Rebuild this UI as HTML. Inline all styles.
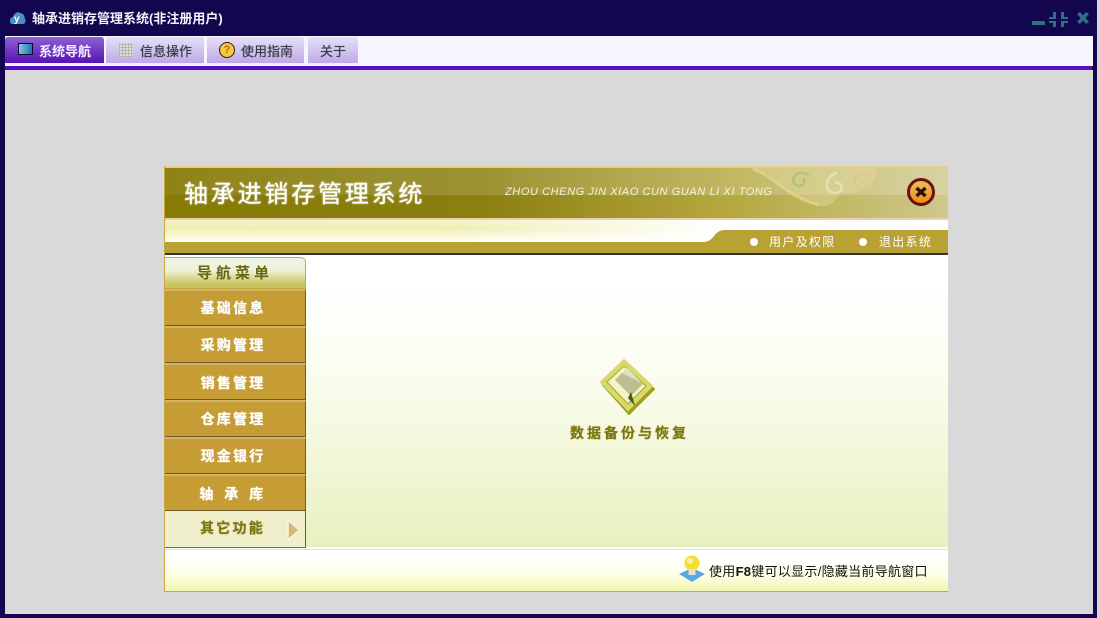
<!DOCTYPE html>
<html><head><meta charset="utf-8"><style>
html,body{margin:0;padding:0;width:1099px;height:618px;overflow:hidden;background:#d9d9d9}
body{position:relative;font-family:"Liberation Sans","WenQuanYi Zen Hei","Noto Sans CJK SC",sans-serif}
.a{position:absolute;white-space:nowrap}
.tab{position:absolute;top:37px;height:26px;background:linear-gradient(#e6def8,#d2c6f0 50%,#bea8e6);border-radius:3px 3px 0 0;border-bottom:2px solid #f1ecfc;font-size:13px;color:#3c3a48;line-height:29px;text-shadow:0 0 .6px #3c3a48}
.m{position:absolute;left:165px;width:141px;background:#c69d35;border-top:2px solid #d3b467;border-bottom:1px solid #6e5a25;border-right:1px solid #6e5a25;box-sizing:border-box;color:#fff;font-size:14px;font-weight:bold;text-align:center;letter-spacing:2.200px;padding-right:4px;text-shadow:0 0 1px #fff}
</style></head><body>
<div class="a" style="left:0;top:0;width:1097px;height:618px;background:#12064f"></div>
<div class="a" style="left:1097px;top:0;width:2px;height:618px;background:#d9d9d9"></div>
<div class="a" style="left:5px;top:70px;width:1088px;height:544px;background:#d9d9d9"></div>
<svg class="a" style="left:9px;top:11px" width="18" height="15" viewBox="0 0 18 15"><path d="M1 10C1 7 3 6 4 6 5 2 9 0 11 2 14 2 16 5 15.500 7 17 8 17 13 14 13H3C2 13 1 12 1 10Z" fill="#4a90c8"/><text x="5" y="11" font-size="10" font-weight="bold" fill="#fff" font-family="Liberation Sans">y</text></svg>
<div class="a" style="left:32px;top:11px;font-size:13px;font-weight:bold;color:#f4f2fb;line-height:16px">轴承进销存管理系统(非注册用户)</div>
<svg class="a" style="left:1030px;top:10px" width="62" height="18" fill="#2f6f86"><rect x="2" y="11" width="13" height="4"/><path d="M23 2h3v7h-7v-2h4zM31 2h3v5h4v2h-7zM19 11h7v6h-3v-4h-4zM31 11h7v2h-4v4h-3z"/><path d="M47 4l3-2 3 3.500L56 2l3 2-3.500 4 3.500 4-3 2-3-3.500L50 14l-3-2 3.500-4z"/></svg>

<div class="a" style="left:5px;top:36px;width:1088px;height:30px;background:#f6f4ff"></div>
<div class="a" style="left:5px;top:66px;width:1087px;height:4px;background:#5a0cc0"></div>
<div class="tab" style="left:5px;width:99px;background:linear-gradient(#8f60d4,#5513b4);color:#f6f0ff;font-weight:bold;text-shadow:none"><span class="a" style="left:34px;top:0">系统导航</span></div>
<div class="a" style="left:18px;top:43px;width:13px;height:10px;border:1.500px solid #0a0a2a;background:linear-gradient(100deg,#8cc8e4,#1c6fa8)"></div>
<div class="tab" style="left:106px;width:98px"><span class="a" style="left:34px;top:0">信息操作</span></div>
<div class="a" style="left:119px;top:43px;width:14px;height:14px;background:repeating-linear-gradient(90deg,#8886 0 1px,#0000 1px 3px),repeating-linear-gradient(0deg,#8886 0 1px,#0000 1px 3px),#e0dcdc"></div>
<div class="tab" style="left:207px;width:97px"><span class="a" style="left:34px;top:0">使用指南</span></div>
<div class="a" style="left:219px;top:42px;width:14px;height:14px;border-radius:50%;background:#f6c83c;border:1.500px solid #2a1a20;color:#b06a20;font-size:11px;line-height:14px;text-align:center;font-weight:bold">?</div>
<div class="tab" style="left:308px;width:50px"><span class="a" style="left:12px;top:0">关于</span></div>

<!-- panel -->
<div class="a" style="left:164px;top:166px;width:784px;height:426px;background:#c9a93f"></div>
<div class="a" style="left:165px;top:166px;width:783px;height:2px;background:#e2cf8e"></div>
<div class="a" style="left:165px;top:168px;width:783px;height:50px;background:linear-gradient(90deg,#877a06 0,#8b7f10 40%,#b5a840 72%,#cfc88c 100%)"></div>
<div class="a" style="left:165px;top:168px;width:783px;height:27px;background:linear-gradient(90deg,#fff1,#fff2 30%,#fff3);"></div>
<svg class="a" style="left:745px;top:167px" width="135" height="44" viewBox="0 0 135 44" fill="none"><path d="M5 1C30 6 42 30 76 39 88 40 92 30 96 26 112 28 132 22 131 1Z" fill="#e6dfa8" opacity=".4"/><path d="M8 2C30 10 42 30 74 38" stroke="#e6d890" stroke-width="3" opacity=".7"/><g stroke-width="2.500" opacity=".6" fill="none"><path d="M64 8C54 2 44 10 50 17 55 22 63 16 58 11" stroke="#a8b878"/><path d="M92 6C80 8 78 26 90 26 100 26 98 14 90 16" stroke="#f2ecc8"/><path d="M128 10C120 2 106 10 110 20 114 28 126 20 118 15" stroke="#e8c088"/></g></svg>
<div class="a" style="left:184px;top:180px;font-size:24px;color:#fff;letter-spacing:2.800px;line-height:30px;text-shadow:0 0 1px #fff,0 0 2px #fff8">轴承进销存管理系统</div>
<div class="a" style="left:505px;top:185px;font-size:11px;font-style:italic;color:#f4f2e0;letter-spacing:.58px;line-height:14px">ZHOU CHENG JIN XIAO CUN GUAN LI XI TONG</div>
<svg class="a" style="left:906px;top:177px" width="30" height="30"><defs><linearGradient id="g" x1="0" y1="0" x2="0" y2="1"><stop offset="0" stop-color="#e8c060"/><stop offset="1" stop-color="#f08a10"/></linearGradient></defs><circle cx="15" cy="15" r="12.500" fill="url(#g)" stroke="#6a1010" stroke-width="3"/><path d="M10.500 11l9 8M19.500 11l-9 8" stroke="#2a1410" stroke-width="3.500"/></svg>

<div class="a" style="left:165px;top:218px;width:783px;height:2px;background:#ead2b0"></div>
<div class="a" style="left:165px;top:220px;width:783px;height:23px;background:linear-gradient(#f5f3c4,#efeeb0 35%,#fffff2 95%)"></div>
<div class="a" style="left:165px;top:220px;width:783px;height:23px;background:linear-gradient(90deg,#fff0 35%,#fff 72%)"></div>
<svg class="a" style="left:165px;top:230px" width="783" height="23"><path d="M0 12H538C550 12 548 0 560 0H783V23H0Z" fill="#b9a133"/></svg>
<div class="a" style="left:165px;top:253px;width:783px;height:2px;background:#333"></div>
<div class="a" style="left:750px;top:238px;width:8px;height:8px;border-radius:50%;background:#fff"></div>
<div class="a" style="left:769px;top:234px;font-size:12px;color:#fff;letter-spacing:1.300px;line-height:16px">用户及权限</div>
<div class="a" style="left:859px;top:238px;width:8px;height:8px;border-radius:50%;background:#fff"></div>
<div class="a" style="left:879px;top:234px;font-size:12px;color:#fff;letter-spacing:1.300px;line-height:16px">退出系统</div>

<div class="a" style="left:165px;top:255px;width:783px;height:293px;background:linear-gradient(#fff 10%,#fbfdf0 40%,#e9f0bf 100%)"></div>
<div class="a" style="left:165px;top:257px;width:141px;height:32px;box-sizing:border-box;border:1px solid #c9a93f;border-left:0;border-radius:0 5px 0 0;background:linear-gradient(#eef5e6 0,#eef2d8 40%,#c9c25c 90%);color:#6b6510;font-size:15px;letter-spacing:4px;text-align:center;line-height:31px;font-weight:bold">导航菜单</div>
<div class="m" style="top:289px;height:37px;line-height:35px">基础信息</div>
<div class="m" style="top:326px;height:37px;line-height:35px">采购管理</div>
<div class="m" style="top:363px;height:37px;line-height:37px">销售管理</div>
<div class="m" style="top:400px;height:37px;line-height:35px">仓库管理</div>
<div class="m" style="top:437px;height:37px;line-height:35px">现金银行</div>
<div class="m" style="top:474px;height:37px;line-height:37px;letter-spacing:3.500px">轴 承 库</div>
<div class="m" style="top:511px;height:37px;line-height:35px;background:#efefcc;color:#7d760f;padding-right:5px;border-top:0;text-shadow:0 0 1px #7d760f;border-bottom-color:#76722a">其它功能</div>
<svg class="a" style="left:285px;top:518px" width="16" height="24"><path d="M3 2L14 12 3 22Z" fill="#d8b870" stroke="#f6f4e0" stroke-width="1.500"/></svg>

<svg class="a" style="left:600px;top:358px" width="56" height="58" viewBox="0 0 56 58"><path d="M24 5L54 31 29 56 3 27Z" fill="#a0a010" stroke="#a0a010" stroke-width="2" stroke-linejoin="round"/><path d="M24 2L52 28 28 52 1 24Z" fill="#d8d870" stroke="#d8d870" stroke-width="2" stroke-linejoin="round"/><path d="M24 8L46 28 28 46 7 24Z" fill="#f4f4c8" stroke="#a8a828" stroke-width="1"/><path d="M27 10L43 26 31 38 15 22Z" fill="#bcc090"/><path d="M27 10L43 26 36 22 22 15Z" fill="#dfe2c0"/><path d="M28 40q2-4 3-6l4 14z" fill="#4a5a18"/></svg>
<div class="a" style="left:570px;top:424px;font-size:14px;font-weight:bold;color:#7d760f;letter-spacing:3px;line-height:18px;text-shadow:0 0 .8px #7d760f">数据备份与恢复</div>

<div class="a" style="left:306px;top:547px;width:642px;height:2px;background:#fff"></div>
<div class="a" style="left:165px;top:548px;width:141px;height:1px;background:#fff"></div>
<div class="a" style="left:165px;top:549px;width:783px;height:1.500px;background:#e8e0cc"></div>
<div class="a" style="left:165px;top:550px;width:783px;height:41px;background:linear-gradient(#fff 20%,#fdfee0 65%,#eef7b0)"></div>
<svg class="a" style="left:678px;top:555px" width="30" height="29"><path d="M1 19L14 13 27 19 14 27Z" fill="#5aa8e4"/><circle cx="14" cy="8" r="7.500" fill="#f8dc30"/><circle cx="12" cy="6" r="3" fill="#fff2a0"/><rect x="10.500" y="14" width="7" height="6" fill="#e8e4cc"/></svg>
<div class="a" style="left:709px;top:563px;font-size:13px;color:#111;line-height:17px;letter-spacing:.28px">使用<b>F8</b>键可以显示/隐藏当前导航窗口</div>
</body></html>
